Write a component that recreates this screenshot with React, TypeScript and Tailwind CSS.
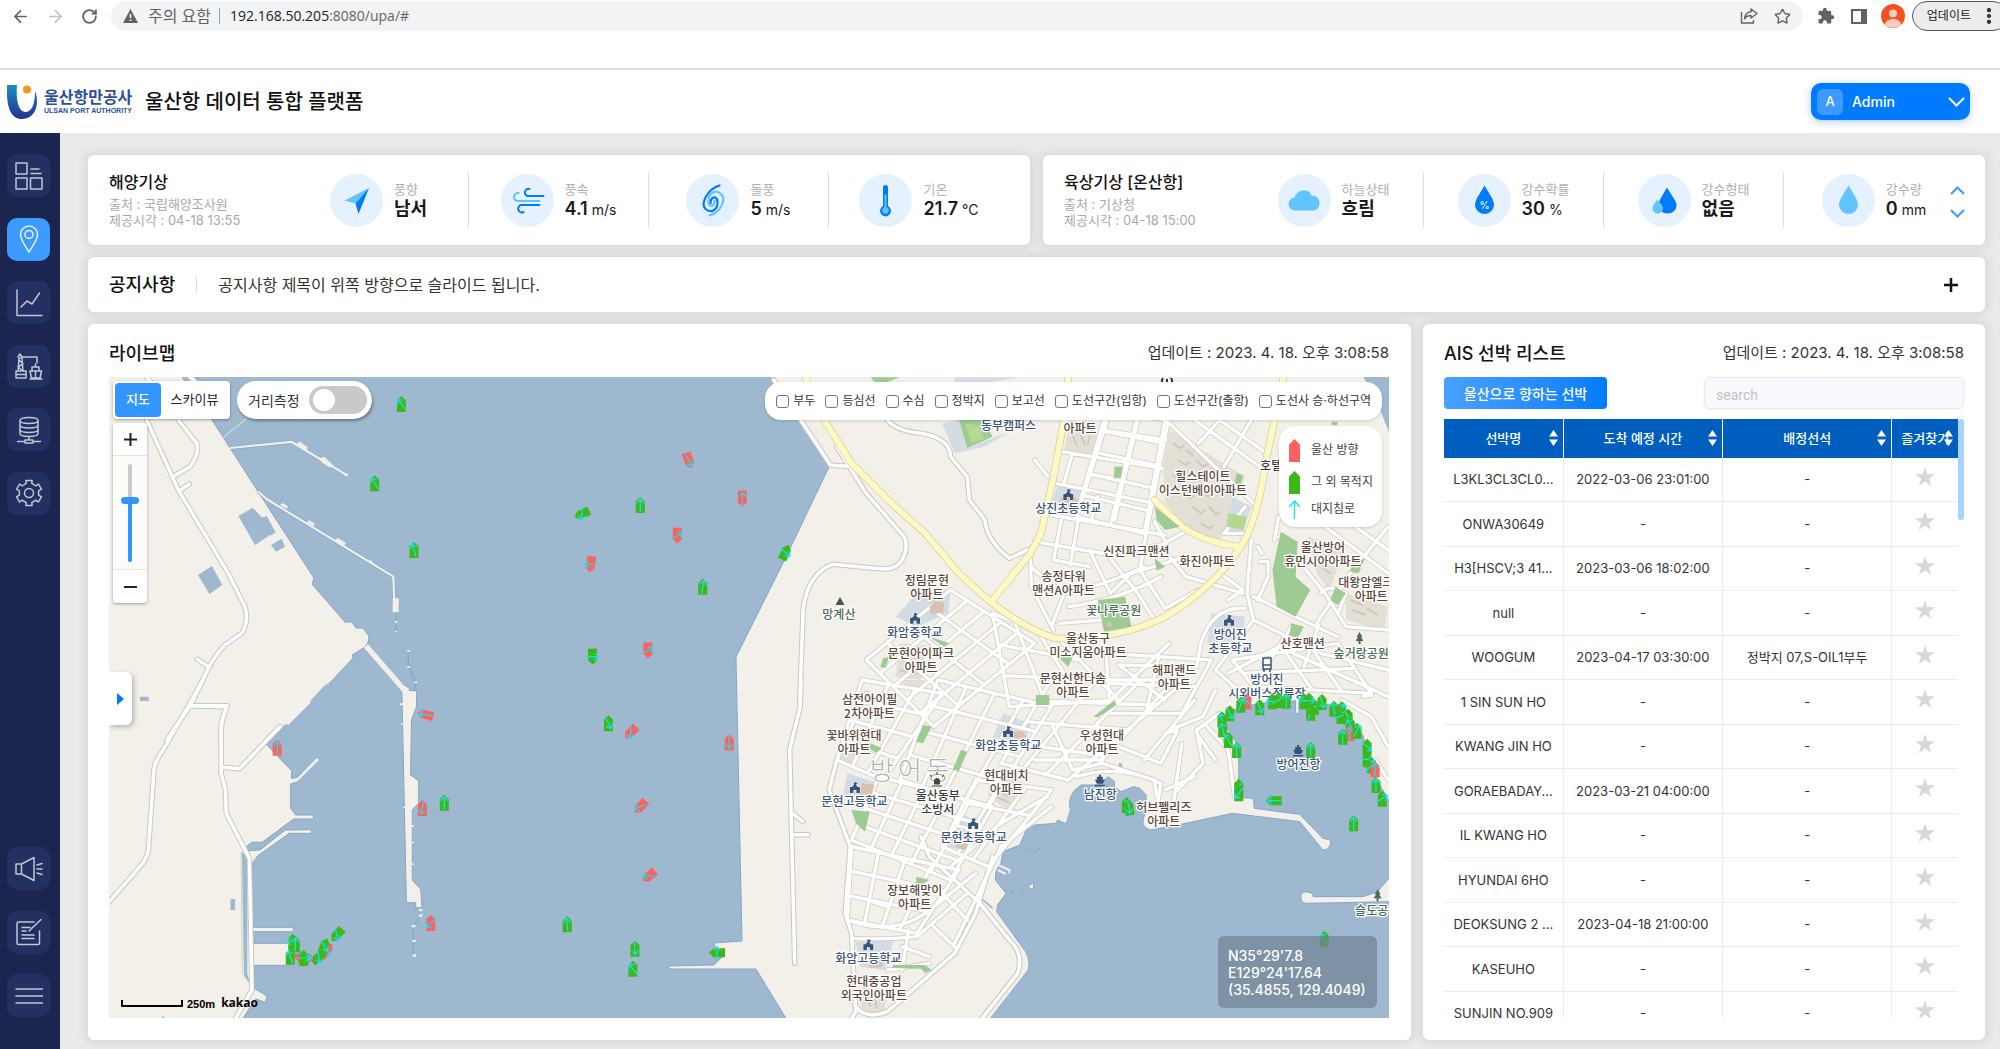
import React from 'react';
import { ArrowLeft, ArrowRight, RotateCw, Star, MoreVertical } from 'lucide-react';
import { MdExtension } from 'react-icons/md';

const SANS = "font-['Inter','Noto_Sans_CJK_KR',sans-serif]";
const CARD = 'rounded-md bg-white shadow-[0_0_10px_3px_rgba(0,0,0,0.08)]';

/* ---------- browser chrome ---------- */

function BrowserBar() {
  return (
    <div className="flex h-[70px] items-start border-b-2 border-[#dedede] bg-white pt-px font-['Open_Sans','Noto_Sans_CJK_KR',sans-serif] text-[#5f6368]">
      <nav className="flex h-[30px] w-[111px] shrink-0 items-center gap-4 pl-[11px]">
        <button aria-label="뒤로"><ArrowLeft size={19} strokeWidth={2.2} /></button>
        <button aria-label="앞으로" className="text-[#bdc1c6]"><ArrowRight size={19} strokeWidth={2.2} /></button>
        <button aria-label="새로고침"><RotateCw size={17} strokeWidth={2.6} /></button>
      </nav>
      <div className="flex h-[30px] flex-1 items-center rounded-full bg-[#f1f3f4] pl-3 pr-3">
        <svg width="15" height="14" viewBox="0 0 15 14" aria-hidden="true">
          <path d="M7.5 0 15 14H0Z" fill="#5f6368" />
          <path d="M7.5 5v4M7.5 10.5v1.5" stroke="#fff" strokeWidth="1.6" />
        </svg>
        <span className="ml-[10px] text-[16px] leading-5">주의 요함</span>
        <span className="ml-2 h-4 w-px bg-[#9aa0a6]" />
        <span className="ml-[10px] text-[14px] leading-5"><span className="text-[#202124]">192.168.50.205</span>:8080/upa/#</span>
        <span className="flex-1" />
        <button aria-label="공유">
          <svg width="18" height="16" viewBox="0 0 18 16" fill="none" stroke="#5f6368" strokeWidth="1.4" strokeLinejoin="round">
            <path d="M1.5 4v11h12v-3" /><path d="M11 1l6 4.5-6 4.500V7.500C8 7.500 6 8.500 4.500 11 5 7 7 4 11 3.700Z" />
          </svg>
        </button>
        <button aria-label="북마크" className="ml-4"><Star size={17} strokeWidth={2} /></button>
      </div>
      <div className="flex h-[30px] items-center pl-[14px]">
        <button aria-label="확장 프로그램"><MdExtension size={18} /></button>
        <button aria-label="사이드 패널" className="ml-4 h-[15px] w-[16px] border-2 border-r-[6px] border-[#5f6368]" />
        <button aria-label="프로필" className="ml-[14px]">
          <svg width="24" height="24" viewBox="0 0 24 24">
            <circle cx="12" cy="12" r="12" fill="#f4511e" />
            <circle cx="12" cy="9.500" r="4" fill="#fbcdbf" />
            <path d="M3.800 20.500C5 16.500 8 15 12 15s7 1.500 8.200 5.500A12 12 0 0 1 3.800 20.500Z" fill="#fbcdbf" />
          </svg>
        </button>
        <button className="-mr-2 ml-[7px] flex h-[30px] items-center rounded-full border border-[#555] bg-[#ececec] pl-[14px] pr-2 text-[12px] text-[#202124]">
          업데이트<MoreVertical size={20} strokeWidth={3} className="ml-2" />
        </button>
      </div>
    </div>
  );
}

function Header() {
  return (
    <header className="flex h-[63px] items-center bg-white pr-[30px] pl-[7px]">
      <svg width="31" height="36" viewBox="0 0 31 36" aria-hidden="true">
        <defs>
          <linearGradient id="logo" x1="0" y1="0" x2="0" y2="1">
            <stop offset="0" stopColor="#1b8fc4" /><stop offset="1" stopColor="#23318f" />
          </linearGradient>
        </defs>
        <path d="M0 1h10C9 12 10 27 18 28c7 0 10-8 10-21 5 12 1 28-13 28C3 35-1 22 0 1Z" fill="url(#logo)" />
        <circle cx="20" cy="5.500" r="4" fill="#f7941d" />
      </svg>
      <div className="ml-[6px] w-[92px] text-[#2a4fa0]">
        <p className="text-[16px] leading-[18px] font-bold whitespace-nowrap">울산항만공사</p>
        <p className="font-['Liberation_Sans',sans-serif] text-[7px] leading-[10px] font-bold whitespace-nowrap">ULSAN PORT AUTHORITY</p>
      </div>
      <h1 className="ml-[9px] flex-1 text-[20px] font-medium text-[#111]">울산항 데이터 통합 플랫폼</h1>
      <button className="flex h-[37px] w-[159px] items-center rounded-[10px] bg-[#007bff] pr-[5px] pl-[6px] text-[14px] font-medium text-white shadow-[0_2px_8px_rgba(0,80,220,0.3)]">
        <span className="flex size-[26px] items-center justify-center rounded-md bg-[#3d9bff] text-[13px]">A</span>
        <span className="ml-[9px] flex-1 text-left">Admin</span>
        <svg width="17" height="10" viewBox="0 0 17 10" fill="none" stroke="#fff" strokeWidth="2" strokeLinecap="round"><path d="M1.500 1.500l7 7 7-7" /></svg>
      </button>
    </header>
  );
}

/* ---------- sidebar ---------- */

const gearPath = (() => {
  const pts: string[] = [];
  for (let i = 0; i < 6; i++) {
    const base = i * 60 - 90;
    [[-27, 9.6], [-16, 10], [-14, 13], [14, 13], [16, 10], [27, 9.6]].forEach(([da, r]) => {
      const a = ((base + da) * Math.PI) / 180;
      pts.push(`${(14 + r * Math.cos(a)).toFixed(1)},${(14 + r * Math.sin(a)).toFixed(1)}`);
    });
  }
  return `M${pts.join('L')}Z`;
})();

const NAV_TOP = [
  { label: '대시보드', d: 'M1 1h11v11H1ZM1 16h11v11H1ZM15.500 16H27v11H15.500ZM16 7h8M16 11.500h10' },
  { label: '지도', active: true, d: 'M14 27C9 19 5.500 14.500 5.500 9.500a8.500 8.500 0 0 1 17 0C22.500 14.500 19 19 14 27ZM10 9.500a4 4 0 1 0 8 0 4 4 0 1 0-8 0' },
  { label: '통계', d: 'M2 1v25.500h25M6 18l6-6 5 3 7.500-11' },
  { label: '항만', d: 'M3 19L4 6h3l1 13M3 5l2-3 2 3h15v6M4 8l4 4-5 3 5 4M1 19h10v7H1ZM1 22.500h10M15 19h11.500l-1.500 7h-8.500ZM17 18v-3h7v3M20.500 15v-3M20.500 19v8M15 27h12' },
  { label: '데이터', d: 'M5 4.500c0-2 4-3 9-3s9 1 9 3-4 3-9 3-9-1-9-3ZM5 4.500v13c0 2 4 3 9 3s9-1 9-3v-13M5 9c0 2 4 3 9 3s9-1 9-3M5 13.500c0 2 4 3 9 3s9-1 9-3M14 20.500V24M10 24h8v3h-8ZM2.500 25.500H10M18 25.500h7.500' },
  { label: '설정', d: `${gearPath}M9.500 14a4.500 4.500 0 1 0 9 0 4.500 4.500 0 1 0-9 0` },
];
const NAV_BOTTOM = [
  { label: '공지', d: 'M1 9h5.500v10H1ZM6.500 9L19 2.500v23L6.500 19M22 10l5-1.500M22 14h5M22 18l5 1.500' },
  { label: '작성', d: 'M19 4H3.500Q2 4 2 5.500V25q0 1.500 1.500 1.500H23q1.500 0 1.500-1.500V13M26 1.500L14 13M7 9.500h8M7 13h4M7 17h12M7 20.500h12' },
  { label: '메뉴', d: 'M1 7h27M1 14h27M1 21h27' },
];

function NavButton({ label, d, active }: { label: string; d: string; active?: boolean }) {
  return (
    <button aria-label={label} className={`flex size-[43px] items-center justify-center rounded-[10px] ${active ? 'bg-[#3d9bff]' : 'bg-[#233061]'}`}>
      <svg width="28" height="28" viewBox="0 0 28 28" fill="none" stroke={active ? '#e8f3ff' : '#c3c6d1'} strokeWidth="1.500" strokeLinejoin="round" strokeLinecap="round">
        <path d={d} />
      </svg>
    </button>
  );
}

function Sidebar() {
  return (
    <aside className="flex w-[60px] shrink-0 flex-col justify-between bg-[#1b2550] pt-[21px] pb-8 pl-[7px]">
      <nav className="flex h-[361px] flex-col justify-between">{NAV_TOP.map((n) => <NavButton key={n.label} {...n} />)}</nav>
      <nav className="flex h-[170px] flex-col justify-between">{NAV_BOTTOM.map((n) => <NavButton key={n.label} {...n} />)}</nav>
    </aside>
  );
}

/* ---------- weather ---------- */

const DARK = '#007bf9';
const LIGHT = '#61c4ff';
const DROP = 'M0-15C5-6 9.500-1 9.500 4.500a9.500 9 0 0 1-19 0C-9.500-1-5-6 0-15Z';

const ICONS: Record<string, React.ReactNode> = {
  arrow: <g><path d="M12.500-12.500L-12 0l11 3Z" fill={LIGHT} /><path d="M12.500-12.500L-1 3 2 13.500Z" fill={DARK} /></g>,
  wind: (
    <g fill="none" strokeWidth="2" strokeLinecap="round">
      <path d="M16-4.500H0a3.500 3.500 0 1 1 2-7" stroke={DARK} />
      <path d="M12 .5H-10a4 4 0 1 1 1-8" stroke={LIGHT} />
      <path d="M12 4.500H-6a3.700 3.700 0 1 0 2 7" stroke={DARK} />
    </g>
  ),
  gust: (
    <g fill="none" strokeWidth="2.200" strokeLinecap="round">
      <path d="M7-15C-6-11-12 4-7 8.500S5 10 5 2 -2-4-2 3" stroke={DARK} />
      <path d="M-3 15C8 12 14-1 9-6S-3-9-4-1 2 8 2 0" stroke={LIGHT} />
    </g>
  ),
  temp: (
    <g>
      <path d="M-2.500-13a2.500 2.500 0 0 1 5 0V5.500a5.500 5.500 0 1 1-5 0Z" fill={DARK} />
      <path d="M0-6V8" stroke={LIGHT} strokeWidth="2" /><circle cy="10" r="3.200" fill={LIGHT} />
    </g>
  ),
  cloud: <path d="M-9 10a6.500 6.500 0 0 1-1-13C-8-9-4-10 0-10s6 2 7 5c5 0 8 3 8 7.500S12 10 9 10Z" fill={LIGHT} />,
  prob: <g><path d={DROP} fill={DARK} /><text y="8" textAnchor="middle" fontSize="10" fontWeight="700" fill="#cfe8ff">%</text></g>,
  type: (
    <g>
      <path d="M2.500-13C7-5 12 0 12 5a9 8 0 0 1-18 0C-6 0-2-5 2.500-13Z" fill={DARK} />
      <path d="M-7-1C-4 3-1.500 5-1.500 8a5.300 5 0 0 1-10.600 0C-12 5-10 3-7-1Z" fill={LIGHT} />
    </g>
  ),
  drop: <path d={DROP} fill={LIGHT} />,
};

type Stat = { icon: string; label: string; value: string; unit?: string };

const SEA: Stat[] = [
  { icon: 'arrow', label: '풍향', value: '남서' },
  { icon: 'wind', label: '풍속', value: '4.1', unit: 'm/s' },
  { icon: 'gust', label: '돌풍', value: '5', unit: 'm/s' },
  { icon: 'temp', label: '기온', value: '21.7', unit: '°C' },
];
const GROUND: Stat[] = [
  { icon: 'cloud', label: '하늘상태', value: '흐림' },
  { icon: 'prob', label: '강수확률', value: '30', unit: '%' },
  { icon: 'type', label: '강수형태', value: '없음' },
  { icon: 'drop', label: '강수량', value: '0', unit: 'mm' },
];

function WeatherCard({ title, source, time, stats, pager }: { title: string; source: string; time: string; stats: Stat[]; pager?: boolean }) {
  return (
    <section className={`${CARD} relative grid h-[90px] grid-cols-5 px-[21px] pt-[18px]`}>
      <div>
        <h2 className="text-[16px] leading-[18px] font-medium text-[#111]">{title}</h2>
        <p className="mt-[5px] text-[13px] leading-4 text-[#a9a9a9]">출처 : {source}</p>
        <p className="text-[13px] leading-4 text-[#a9a9a9]">제공시각 : {time}</p>
      </div>
      {stats.map((s, i) => (
        <div key={s.label} className={`flex h-[54px] items-center justify-center gap-[11px] ${i < 3 ? 'border-r border-[#dcdcdc]' : ''}`}>
          <svg width="53" height="53" viewBox="-26.500 -26.500 53 53" className="shrink-0" aria-hidden="true">
            <circle r="26.500" fill="#e5f1ff" />{ICONS[s.icon]}
          </svg>
          <div className="pt-[3px] whitespace-nowrap">
            <p className="text-[13px] leading-[15px] text-[#b0b0b0]">{s.label}</p>
            <p className="text-[18px] leading-6 font-semibold text-[#1a1a1a]">
              {s.value}{s.unit && <span className="ml-1 text-[14px] font-normal">{s.unit}</span>}
            </p>
          </div>
        </div>
      ))}
      {pager && (
        <div className="absolute top-[31px] right-[20px] flex flex-col gap-[14px]">
          <button aria-label="이전"><svg width="15" height="9" fill="none" stroke="#3d9bff" strokeWidth="2"><path d="M1 8l6.500-6.500L14 8" /></svg></button>
          <button aria-label="다음"><svg width="15" height="9" fill="none" stroke="#3d9bff" strokeWidth="2"><path d="M1 1l6.500 6.500L14 1" /></svg></button>
        </div>
      )}
    </section>
  );
}

/* ---------- map ---------- */

/* The chart is drawn in sheets, each with its own grid; a sheet gives origin and scale. */
type Sheet = 'w' | 'n' | 's' | 'd' | 'o';
const SHEETS: Record<Sheet, [number, number, number, number]> = {
  w: [100, 320, 1 / 3, 1 / 3],
  n: [740, 360, 1 / 2.376, 1 / 3],
  s: [740, 680, 1 / 2.376, 1 / 3],
  d: [100, 680, 1 / 2.376, 1 / 3],
  o: [0, 0, 1.2755, 1.2755],
};
const matrix = (s: Sheet) => {
  const [x, y, sx, sy] = SHEETS[s];
  return `matrix(${sx} 0 0 ${sy} ${x} ${y})`;
};
const place = (s: Sheet, px: number, py: number): [number, number] => {
  const [x, y, sx, sy] = SHEETS[s];
  return [x + px * sx, y + py * sy];
};

/* Street lattice between four corners (a-b is the top edge, d-c the bottom edge). */
function lattice(q: number[], cols: number, rows: number) {
  const [ax, ay, bx, by, cx, cy, dx, dy] = q;
  const mix = (p: number, r: number, t: number) => Math.round(p + (r - p) * t);
  let d = '';
  for (let i = 0; i <= cols; i++) {
    const t = i / cols;
    d += `M${mix(ax, bx, t)} ${mix(ay, by, t)}L${mix(dx, cx, t)} ${mix(dy, cy, t)}`;
  }
  for (let j = 0; j <= rows; j++) {
    const t = j / rows;
    d += `M${mix(ax, dx, t)} ${mix(ay, dy, t)}L${mix(bx, cx, t)} ${mix(by, cy, t)}`;
  }
  return d;
}

const WIDE: [Sheet, string][] = [
  ['w', 'M140 300L235 510 385 760 435 860Q448 905 425 940L375 975Q345 1005 325 1045L272 1155 200 1260M235 300L290 370Q300 400 270 440L222 468M240 512L268 492M325 1040L292 1018M272 1157L380 1160 366 1200 362 1260M140 170L155 190M270 170L290 190M540 1220L500 1260'],
  ['d', 'M245 0L150 210Q125 250 127 290L115 510Q112 535 95 560L22 665M215 77L302 77 288 130V280L298 330 300 400 355 535 361 930 322 1015M292 262L332 266 427 140'],
  ['n', 'M80 60L160 210 215 315 265 320M230 260L300 400 390 530Q402 560 385 600 370 630 340 627L220 613Q160 640 150 750L142 1020M350 180Q370 212 430 220 500 235 500 290L540 350 545 420 582 480Q585 540 640 595L700 560'],
  ['s', 'M145 0L143 80 118 210 130 850M130 464H162M125 400L150 425M265 1015L275 995 265 760 250 700 262 500 212 330 230 240 300 40M575 1015L660 880Q675 820 640 780L570 670 450 530 430 470M275 980Q300 1020 350 995L510 820 560 700 600 530'],
];
const STREETS: [Sheet, string][] = [
  ['n', 'M700 300L732 350M865 180L800 460M945 180L890 480M1020 60L1015 200 965 520 950 630 1010 745M860 210L1012 240M765 275L1005 325M840 345L910 360M750 370L985 430M740 465L1010 525M790 280L770 370M850 410L835 480M1020 190L1220 430M1080 180L1235 320M1140 180L1245 275M1215 180L1150 320M1175 130L1090 250M700 545L870 582 1000 555 1065 510M985 485L1015 555M765 470L745 600M805 470L785 615M690 580L692 680 745 810M745 600L830 620M830 570L880 700 930 640M870 580L945 700 985 780M690 620L770 700Q880 670 960 620M740 800L770 700M780 740Q900 720 1000 650M1000 560L1060 650 1195 700M930 640L1060 590M1010 745L1090 690M760 790L860 780'],
  ['n', 'M1215 540L1205 700 1220 780 1130 930M1280 470L1270 540M1230 560L1240 580M1235 605H1255V640M1280 530L1390 700 1440 800 1540 810M1380 490L1540 640M1440 480L1540 570M1540 500L1450 640 1370 790M1220 710L1420 830M1200 745Q1120 740 1095 850L1085 920 900 915M1220 780L1380 880 1540 930M1255 650L1230 720M1380 700Q1400 670 1440 700L1420 760M1140 640L1195 690 1160 720M1130 930L1200 1010M1160 940L1280 860 1540 1010M1310 800L1260 900M1375 795L1340 920M1020 850L880 1020M900 915L1010 1020M1200 440L1150 520H1210'],
  ['n', lattice([500, 690, 700, 850, 460, 1100, 300, 900], 5, 4)],
  ['n', lattice([600, 760, 760, 840, 900, 1020, 640, 1040], 3, 3)],
  ['n', lattice([870, 880, 1120, 900, 1050, 1060, 880, 1060], 2, 2)],
  ['n', lattice([1170, 900, 1420, 850, 1500, 1000, 1220, 980], 4, 2)],
  ['n', lattice([880, 150, 1010, 180, 960, 520, 800, 470], 2, 5)],
  ['s', lattice([290, 0, 480, 40, 340, 300, 230, 240], 3, 4)],
  ['s', lattice([470, 0, 740, 80, 590, 380, 380, 300], 4, 4)],
  ['s', lattice([740, 0, 1060, 0, 780, 300, 620, 250], 3, 4)],
  ['s', lattice([330, 290, 600, 380, 500, 600, 265, 480], 5, 4)],
  ['s', lattice([265, 500, 520, 570, 420, 760, 255, 720], 4, 3)],
  ['s', lattice([560, 300, 740, 330, 590, 560, 480, 500], 3, 3)],
  ['s', 'M740 130L790 270 860 250 985 300 990 350M800 290Q900 250 1000 310L990 390M700 240L860 240 1010 30M860 250L850 130M900 200L1000 250 1040 150 1010 160M1020 150L1100 110 1130 30M1040 330L1100 250 1085 150 1140 100M1050 190L1030 370M1010 330L1080 290M1110 140L1160 210 1175 350M1090 170L1130 240M960 240L1080 60M740 380L620 500 510 790M255 720Q360 770 440 700L560 580M270 775Q330 780 420 770L540 640M400 750L385 870M480 640L540 720M460 740L510 800M350 870L450 850M385 800L450 830M300 660L350 680M500 560L620 430 730 350M1540 200L1500 110 1430 60M1480 50L1500 45M1540 300L1510 240'],
];
const AVENUES: [Sheet, string][] = [
  ['n', 'M155 50L205 190 265 310 360 430 440 520 520 640 590 720Q680 810 750 835 900 840 1010 770 1120 690 1190 560 1230 480 1250 300L1292 50M780 50L770 180 745 350 715 520 690 580 600 720M985 420L1050 500Q1110 550 1190 560'],
];
const PARKS: [Sheet, string][] = [
  ['n', 'M310 52H380L350 66H320ZM520 180L580 180 600 230 540 265ZM890 320H910L905 355H888ZM1180 340L1195 345 1190 375 1175 370ZM985 440L1045 500 1010 510 990 480ZM985 595L1010 620 990 632ZM1285 515L1325 545 1320 650 1355 690 1320 770 1275 740 1265 630ZM1455 610L1485 595 1470 640 1450 635ZM1415 680L1440 700 1420 735 1403 720ZM850 720L915 710 930 800 865 815ZM1310 790L1340 800 1325 835 1305 825ZM340 895L355 890 345 925 333 920ZM450 830L498 850 485 860ZM755 890L795 880 780 920ZM1405 185H1420V195H1405Z'],
  ['s', 'M703 45H735V75H703ZM840 110L890 60 895 75 850 112ZM435 135L455 140 435 190 418 185ZM310 190L337 205 325 218 307 208ZM525 210L540 215 520 273 505 270ZM265 390L308 395 297 455 275 430ZM418 590L450 600 420 620ZM365 855H440L455 870 440 880 430 866 360 864Z'],
];
const CAMPUS: [Sheet, string][] = [
  ['n', 'M510 52H660L600 66H510ZM480 190L520 180 540 265 600 235 640 215 580 260 510 280ZM755 375L815 385 800 440 740 430ZM1170 410L1215 440 1190 530 1150 510ZM370 770L420 700 500 690 495 760 420 800ZM1120 760L1200 770 1195 850 1150 880 1110 850Z'],
  ['s', 'M625 100L690 130 680 180 600 175ZM255 280L330 310 310 360 245 345ZM530 405L580 430 540 510 490 500ZM275 785L365 780 345 870 285 860Z'],
];
const BLOCKS: [Sheet, string][] = [
  ['n', 'M1020 210L1200 350 1140 540 1080 530 1010 430 1005 320ZM780 210L850 215 835 285 770 270ZM1350 530L1440 560 1400 690 1370 640ZM1440 700L1540 740 1530 810 1440 780ZM380 850L470 860 430 960 370 950Z'],
  ['s', 'M590 280L660 300 690 320 640 390 590 350ZM235 200L290 220 270 255 235 235ZM290 920L350 940 340 1005 285 1000ZM370 0H440L420 30Z'],
];
/* Building outlines inside the apartment blocks. */
const HOUSES: [Sheet, string][] = [
  ['n', 'M1030 250l15 15 10-10M1060 270l18 18M1040 300l20 15 8-10M1085 300l15 20 12-8M1030 345l18 18 10-8M1075 345l20 18M1110 340l14 16 12-8M1050 395l20 20 10-8M1095 390l18 20 12-12M1140 380l14 12M1075 440l20 20 10-10M1115 440l16 24 10-10M1095 490l20 15 10-10M790 225l10 30M810 225l10 30M830 230l-4 25M1380 560l30 20M1375 590l30 22M1385 625l20 16M1450 720l30 15M1455 750l30 15M1490 745l25 20M390 870l50 15M385 900l50 15M380 930l40 12'],
  ['s', 'M605 300l40 25M602 325l36 24M610 350l28 18M300 940l10 40M320 950l5 35'],
];

type Ship = [Sheet, number, number, 'g' | 'r', number, number];
const SHIPS: Ship[] = [
  ['w', 904, 252, 'g', 0, -40], ['w', 824, 490, 'g', 0, -32], ['w', 942, 690, 'g', 0, -16], ['w', 1446, 582, 'g', -115, 180],
  ['w', 1472, 733, 'r', 188, -95], ['w', 1478, 1010, 'g', 178, 92],
  ['o', 540, 361, 'r', 160, 150], ['o', 502, 396, 'g', 0, 0], ['o', 582, 391, 'r', 180, 0], ['o', 531, 420, 'r', 180, 60],
  ['o', 551, 460, 'g', 0, 10], ['o', 508, 510, 'r', 180, 60], ['n', 108, 577, 'g', 25, 130],
  ['d', 773, 104, 'r', -75, -80], ['d', 1208, 130, 'g', 0, 150], ['d', 1261, 157, 'r', -138, 185], ['d', 1495, 187, 'r', 0, 178],
  ['d', 421, 203, 'r', 0, 0], ['d', 766, 384, 'r', 0, 190], ['d', 818, 368, 'g', 0, 0], ['d', 1284, 380, 'r', -138, -110],
  ['d', 1304, 588, 'r', -128, -92], ['d', 786, 729, 'r', 0, -130], ['d', 1110, 733, 'g', 0, -5], ['d', 1271, 806, 'g', 0, 175],
  ['d', 1266, 866, 'g', 0, -40], ['d', 1466, 818, 'g', -90, 0], ['d', 563, 765, 'g', -140, 165], ['d', 539, 810, 'r', 40, 150],
  ['d', 533, 798, 'g', 20, 150], ['d', 520, 832, 'g', 55, 170], ['d', 468, 820, 'r', -40, 90], ['d', 490, 835, 'r', 90, 80],
  ['d', 458, 785, 'g', 0, -90], ['d', 452, 830, 'g', 0, -20], ['d', 484, 834, 'g', 0, 90], ['d', 464, 792, 'g', 0, 0],
  ['s', 1145, 118, 'g', 0, -20], ['s', 1147, 148, 'g', 0, -15], ['s', 1164, 100, 'g', 0, 150], ['s', 1160, 180, 'g', 0, -30],
  ['s', 1180, 210, 'g', 0, 0], ['s', 1204, 64, 'r', 0, -50], ['s', 1190, 74, 'g', 0, 20], ['s', 1235, 82, 'g', 0, 160],
  ['s', 1265, 64, 'g', 0, -90], ['s', 1280, 60, 'g', 0, 60], ['s', 1298, 62, 'g', 0, 0], ['s', 1340, 64, 'g', 0, -60],
  ['s', 1356, 98, 'g', 0, 20], ['s', 1365, 80, 'g', 0, 90], ['s', 1383, 66, 'g', 0, 160], ['s', 1352, 62, 'g', 0, 90],
  ['s', 1411, 86, 'g', 0, -10], ['s', 1430, 88, 'g', 0, 30], ['s', 1428, 108, 'g', 0, 70], ['s', 1445, 110, 'g', 0, 150],
  ['s', 1450, 135, 'g', 0, -30], ['s', 1448, 160, 'r', 0, 0], ['s', 1432, 170, 'g', 0, 0], ['s', 1466, 152, 'g', 0, 30],
  ['s', 1490, 200, 'g', 0, 130], ['s', 1490, 238, 'g', 0, 90], ['s', 1500, 256, 'g', 0, 40], ['s', 1509, 268, 'r', 0, 0],
  ['s', 1511, 315, 'g', 0, 0], ['s', 1526, 356, 'g', 0, 60], ['s', 1185, 320, 'g', 0, -140], ['s', 1185, 340, 'g', 0, -140],
  ['s', 1268, 362, 'g', -90, -90], ['s', 1458, 430, 'g', 0, 0], ['s', 1356, 210, 'g', 0, 0], ['s', 1388, 776, 'g', 0, -40],
  ['s', 918, 375, 'g', 0, 160], ['s', 924, 382, 'g', -10, 170],
];

type Kind = 'apt' | 'school' | 'park' | 'plain';
const INK: Record<Kind, string> = { apt: '#5b4738', school: '#3a5478', park: '#4d6b57', plain: '#3a3a3a' };
const LABELS: [Sheet, number, number, Kind, string[]][] = [
  ['n', 638, 211, 'school', ['동부캠퍼스']],
  ['n', 808, 178, 'apt', ['상아2차', '아파트']],
  ['n', 1100, 362, 'apt', ['힐스테이트', '이스턴베이아파트']],
  ['n', 1262, 331, 'plain', ['호텔']],
  ['n', 780, 458, 'school', ['상진초등학교']],
  ['n', 942, 588, 'apt', ['신진파크맨션']],
  ['n', 1110, 617, 'apt', ['화진아파트']],
  ['n', 1385, 576, 'apt', ['울산방어', '휴먼시아아파트']],
  ['n', 1500, 681, 'apt', ['대왕암엘크루', '아파트']],
  ['n', 769, 662, 'apt', ['송정타워', '맨션A아파트']],
  ['n', 444, 674, 'apt', ['정림문현', '아파트']],
  ['n', 235, 778, 'park', ['망계산']],
  ['n', 415, 830, 'school', ['화암중학교']],
  ['n', 888, 766, 'park', ['꽃나루공원']],
  ['n', 827, 848, 'apt', ['울산동구', '미소지움아파트']],
  ['n', 430, 893, 'apt', ['문현아이파크', '아파트']],
  ['n', 1165, 836, 'school', ['방어진', '초등학교']],
  ['n', 1337, 864, 'apt', ['산호맨션']],
  ['n', 1476, 894, 'park', ['숲거랑공원']],
  ['n', 1032, 944, 'apt', ['해피랜드', '아파트']],
  ['n', 791, 970, 'apt', ['문현신한다솜', '아파트']],
  ['n', 1252, 972, 'school', ['방어진', '시외버스정류장']],
  ['s', 308, 73, 'apt', ['삼전아이필', '2차아파트']],
  ['s', 271, 181, 'apt', ['꽃바위현대', '아파트']],
  ['s', 637, 210, 'school', ['화암초등학교']],
  ['s', 860, 181, 'apt', ['우성현대', '아파트']],
  ['s', 633, 300, 'apt', ['현대비치', '아파트']],
  ['s', 470, 360, 'plain', ['울산동부', '소방서']],
  ['s', 272, 379, 'school', ['문현고등학교']],
  ['s', 555, 486, 'school', ['문현초등학교']],
  ['s', 856, 356, 'school', ['남진항']],
  ['s', 1007, 397, 'apt', ['허브펠리즈', '아파트']],
  ['s', 1327, 267, 'school', ['방어진항']],
  ['s', 415, 645, 'apt', ['장보해맞이', '아파트']],
  ['s', 305, 850, 'school', ['화암고등학교']],
  ['s', 318, 918, 'apt', ['현대중공업', '외국인아파트']],
  ['s', 1514, 705, 'park', ['슬도공원']],
];
const SCHOOLS: [Sheet, number, number][] = [
  ['n', 780, 405], ['n', 416, 776], ['n', 1162, 782], ['s', 637, 156], ['s', 273, 324], ['s', 554, 432], ['s', 305, 796],
];
const HARBORS: [Sheet, number, number][] = [['s', 855, 302], ['s', 1326, 213]];
const TREES: [Sheet, number, number][] = [['n', 1472, 834], ['s', 1515, 646]];

function Layer({ data, ...rest }: { data: [Sheet, string][] } & React.SVGProps<SVGPathElement>) {
  return <>{data.map(([s, d], i) => <path key={i} transform={matrix(s)} d={d} vectorEffect="non-scaling-stroke" {...rest} />)}</>;
}

const SHORE = '#85a7c9';
const LAND = '#f3f0e9';
const SHORE_LINES: [Sheet, string][] = [['w', 'M370 352L440 295']];
const PIERS: [Sheet, string][] = [
  ['w', 'M390 384L575 366 740 465M475 515L500 537 880 770 883 850'],
];

function PortMap() {
  return (
    <svg viewBox="109 377 1280 641" preserveAspectRatio="xMidYMid slice" className="absolute inset-0 size-full font-['Noto_Sans_CJK_KR',sans-serif]" role="img" aria-label="울산항 지도">
      <rect x="109" y="377" width="1280" height="641" fill="#9db8cf" />
      <g fill={LAND} stroke={SHORE} strokeWidth="1">
        <path d="M100 370H177L212 420 223 437 257 490 314 578 312 584 345 622H352L356 628H363L369 636 368 643 365 647 352 655 353 658 327 686 327 700H100Z" />
        <path d="M766 370L829 467 786 557 736 657 742 941 714 943 716 950 722 957 714 965 669 966V969L756 969 790 1025H1395V370Z" />
        <path d="M22 10H548L447 138 442 133 395 193 455 272V295L468 293 515 232 522 240 470 305 453 312V385L465 405H505L508 412 503 417H460L385 487H360L345 503 352 512 380 510 440 450 500 449 503 455 500 460H450L375 527 362 550V742H458L460 750 455 755H363V790H450V856H366V925L397 948 393 967 370 957 332 1030H0V10Z" transform={matrix('d')} vectorEffect="non-scaling-stroke" />
        <path d="M700 -12L717 10 735 25V32H752V80L740 120 738 285 757 303V370L742 390V600L762 628 765 683H750V668H728L717 15Z" transform={matrix('d')} vectorEffect="non-scaling-stroke" />
        <path d="M592 1020L685 870Q692 830 670 800L610 695 612 675 632 640 607 600Q605 570 620 550L625 515 665 495 680 450 700 435 750 430 755 420 775 432 785 390Q775 345 810 315L850 315 875 290 890 305V320L905 335 935 320 950 325 965 345 965 395Q945 440 975 450L1040 435 1170 400 1330 425 1385 510Q1405 510 1403 480L1385 475 1330 403 1222 385 1220 355 1185 353V200L1150 130Q1150 100 1190 80L1270 65 1320 62V100H1328V62Q1400 60 1425 95L1480 165 1500 270 1545 370V1020Z" fill="#9db8cf" transform={matrix('s')} vectorEffect="non-scaling-stroke" />
        <path d="M1333 652Q1330 638 1345 635 1362 638 1362 650L1480 650 1515 635 1545 590V665L1345 670Q1333 668 1333 652ZM685 510l8-10-5 14ZM700 515l14-14-8 14ZM685 620l12-14 1 16-6 6ZM642 630l6 12ZM668 630l8 16-6-4Z" transform={matrix('s')} vectorEffect="non-scaling-stroke" />
      </g>
      <path d="M100 670H341L309 703H100Z" fill={LAND} />
      <path d="M324 688V702H311Z" fill="#9db8cf" stroke="#9db8cf" strokeWidth="7" strokeLinejoin="round" transform="translate(3 0)" />
      <path d="M1178 375" />
      <path d="M605 550l35 20v10M612 570l20 12" transform={matrix('s')} fill="none" stroke={LAND} strokeWidth="2" vectorEffect="non-scaling-stroke" />
      <g fill="#9db8cf">
        <path d="M415 588L458 563 525 635 465 675ZM480 595L500 588 527 637 512 647ZM513 675L545 656 555 680 528 695ZM294 765L336 738 367 795 328 822ZM120 1130H146V1143H120Z" transform={matrix('w')} />
        <path d="M337 515L350 530V880L356 912 342 885ZM310 657H321V690H310ZM145 1012l5-4 5 6Z" transform={matrix('d')} />
        <path d="M1480 50H1545V225L1505 100Z" transform={matrix('n')} />
        <path d="M900 250h8v22h-8ZM575 655l25 25v8l-25-28Z" transform={matrix('s')} />
      </g>

      <Layer data={SHORE_LINES} fill="none" stroke="#c3d2df" strokeWidth="1.500" />
      <Layer data={PIERS} fill="none" stroke={SHORE} strokeWidth="3.500" />
      <Layer data={PIERS} fill="none" stroke={LAND} strokeWidth="2.200" />
      <g transform={matrix('w')}>
        <path d="M590 370l10-5 24 18-6 8ZM660 415l12-5 30 28-14 4-24-16ZM735 460l10 2-4 8-8-4ZM540 555l8-6 16 10-4 8ZM620 607l8-6 16 10-4 8ZM705 660l8-6 24 14-4 10ZM805 726l6-6 20 20ZM878 835h18v42h-18Z" fill={LAND} />
        <path d="M798 978L915 1112" stroke={LAND} strokeWidth="16" />
        <path d="M888 877V935M925 993V1040L948 1087 944 1112" fill="none" stroke={SHORE} strokeWidth="4" />
        <path d="M885 902h7v6h-7ZM886 932h6v5h-6ZM922 990h7v6h-7ZM922 1038h7v6h-7ZM944 1084h7v6h-7Z" fill={LAND} />
      </g>
      <g transform={matrix('d')}>
        <path d="M762 690L760 710 744 738V825" fill="none" stroke={SHORE} strokeWidth="3" />
        <path d="M758 687h8v7h-8ZM758 703h8v7h-8ZM741 735h8v7h-8ZM742 779h8v7h-8ZM743 823h8v7h-8ZM712 70h8v6h-8ZM716 130h6v5h-6ZM740 435h6v5h-6ZM740 485h6v5h-6ZM720 380h6v5h-6ZM740 550h6v5h-6Z" fill={LAND} />
        <path d="M335 515L338 880L356 910" fill="none" stroke="#b9d0b0" strokeWidth="2" />
      </g>

      <Layer data={BLOCKS} fill="#e3dfd5" />
      <Layer data={HOUSES} fill="none" stroke="#cdc9be" strokeWidth="2" />
      <Layer data={CAMPUS} fill="#d3dbe5" />
      <g fill="none" strokeLinejoin="round" strokeLinecap="round">
        <Layer data={STREETS} stroke="#cfccc5" strokeWidth="5" />
        <Layer data={WIDE} stroke="#c9c7c1" strokeWidth="5.500" />
        <Layer data={STREETS} stroke="#fff" strokeWidth="3.400" />
        <Layer data={WIDE} stroke="#fff" strokeWidth="3.500" />
        <Layer data={AVENUES} stroke="#d9cf9f" strokeWidth="7.500" />
        <Layer data={AVENUES} stroke="#fdf8c4" strokeWidth="6" />
      </g>
      <Layer data={PARKS} fill="#9dcb93" />
      <path d="M1160 460l45 10-8 40-40-10ZM535 190l35 8 10 40-30 10Z" transform={matrix('n')} fill="#b5d88f" />
      <path d="M640 160l30-10 10 20-20 15ZM290 310l30 5-8 35-28-5ZM510 485l30 5-5 20-20-5ZM305 840l35-5-2 26-30 4Z" transform={matrix('s')} fill="#d9c2b0" />
      <path d="M450 740l15-20 20 8-2 30-30 5ZM760 415l35-5 15 25-45 8ZM872 790l10-5 2 14-12 2Z" transform={matrix('n')} fill="#d9c2b0" />

      <text x="870" y="780" fontSize="26" letterSpacing="4" fontWeight="300" fill="#b3b0ab" stroke="#fff" strokeWidth="2" paintOrder="stroke">방어동</text>

      {SCHOOLS.map(([s, px, py], i) => {
        const [x, y] = place(s, px, py);
        return <path key={i} transform={`translate(${x} ${y})`} d="M-5 5V-1H-3L-1-3V-6L3-5 1-3 3-1H5V5H1.500V2H-1.500V5Z" fill="#3a5478" stroke="#fff" strokeWidth="1" paintOrder="stroke" />;
      })}
      {HARBORS.map(([s, px, py], i) => {
        const [x, y] = place(s, px, py);
        return <path key={i} transform={`translate(${x} ${y})`} d="M-1-6H1V-4H3V-1H5L3 3H-3L-5-1H-3V-4H-1ZM-5 4H5V5.500H-5Z" fill="#3a5478" />;
      })}
      {TREES.map(([s, px, py], i) => {
        const [x, y] = place(s, px, py);
        return <path key={i} transform={`translate(${x} ${y})`} d="M0-6L3-1H1.500L4 3H1V6H-1V3H-4L-1.500-1H-3Z" fill="#4d6b57" />;
      })}
      <path d="M840 597l4.500 8h-9Z" fill="#3f5a49" />
      <path d="M934.500 784v-3a2.500 2.500 0 0 1 5 0v3ZM932 786h10" fill="#444" stroke="#444" />
      <path d="M932 777l-2-2M942 777l2-2M937 775v-3" stroke="#444" />
      <path d="M1263 658h8v11h-8ZM1264 669v3M1270 669v3M1263 665h8" fill="#fff" stroke="#3a5478" strokeWidth="1.500" />
      <path d="M1163 378a5 5 0 0 0 0 6M1171 378a5 5 0 0 1 0 6M1167 379v4" stroke="#333" strokeWidth="2" fill="none" />

      {LABELS.map(([s, px, py, kind, lines], i) => {
        const [x, y] = place(s, px, py);
        return (
          <text key={i} x={x} y={y} textAnchor="middle" fontSize="12" fontWeight="500" fill={INK[kind]} stroke="#fff" strokeWidth="2.500" strokeLinejoin="round" paintOrder="stroke">
            {lines.map((l, j) => <tspan key={l} x={x} dy={j ? 14 : 0}>{l}</tspan>)}
          </text>
        );
      })}

      {SHIPS.map(([s, px, py, c, turn, heading], i) => {
        const [x, y] = place(s, px, py);
        return (
          <g key={i} transform={`translate(${x} ${y})`}>
            <path transform={`rotate(${turn})`} d="M0-8L4.500-3.500V8H-4.500V-3.500Z" fill={c === 'g' ? '#3db81a' : '#ff6161'} />
            <path transform={`rotate(${heading})`} d="M0 7V-6M-3.500-2L0-6 3.500-2" fill="none" stroke="#19e3ee" strokeWidth="1.200" />
          </g>
        );
      })}
    </svg>
  );
}

const LAYERS = ['부두', '등심선', '수심', '정박지', '보고선', '도선구간(입항)', '도선구간(출항)', '도선사 승·하선구역'];

function MapControls() {
  return (
    <>
      <div className="absolute top-1 left-1 flex h-[38px] w-[117px] items-center rounded bg-white p-[2px] text-[13px] shadow-[0_1px_3px_rgba(0,0,0,0.35)]">
        <button className="h-full w-[46px] rounded bg-[#3396ff] font-medium text-white">지도</button>
        <button className="flex-1 text-[#222]">스카이뷰</button>
      </div>
      <label className="absolute top-1 left-[128px] flex h-[38px] items-center gap-[9px] rounded-full bg-white pr-[5px] pl-[11px] text-[14px] text-[#333] shadow-[1px_2px_3px_rgba(0,0,0,0.35)]">
        거리측정
        <input type="checkbox" className="peer sr-only" />
        <span className="flex h-[28px] w-[58px] items-center rounded-full bg-[#c9c9c9] pl-1"><span className="size-[22px] rounded-full bg-white" /></span>
      </label>
      <div className="absolute top-[46px] left-1 flex w-[34px] flex-col items-center rounded-[3px] bg-white shadow-[0_1px_3px_rgba(0,0,0,0.35)]">
        <button aria-label="확대" className="flex h-[33px] w-full items-center justify-center border-b border-[#e4e4e4]">
          <svg width="13" height="13" stroke="#222" strokeWidth="2"><path d="M6.500 0v13M0 6.500h13" /></svg>
        </button>
        <div className="relative flex h-[113px] w-full justify-center bg-[#fcfcfb] pt-[8px]">
          <div className="h-[98px] w-1 rounded bg-[#ccc] pt-9"><div className="h-[62px] rounded bg-[#3396ff]" /></div>
          <span className="absolute top-[41px] h-[7px] w-[18px] rounded-sm bg-[#3396ff]" />
          <input type="range" aria-label="지도 확대 수준" className="absolute inset-0 size-full opacity-0 [writing-mode:vertical-lr]" />
        </div>
        <button aria-label="축소" className="flex h-[34px] w-full items-center justify-center border-t border-[#e4e4e4]">
          <svg width="13" height="2" stroke="#222" strokeWidth="2"><path d="M0 1h13" /></svg>
        </button>
      </div>
      <button aria-label="패널 열기" className="absolute top-[295px] left-0 flex h-[53px] w-[23px] items-center justify-center rounded-r-md bg-white shadow-[2px_2px_5px_rgba(0,0,0,0.25)]">
        <svg width="7" height="12"><path d="M0 0l7 6-7 6Z" fill="#007bff" /></svg>
      </button>

      <div className="absolute top-[5px] right-[7px] flex h-[38px] items-center gap-[10px] rounded-[16px] bg-white px-[11px] text-[12px] text-[#333] shadow-[0_1px_3px_rgba(0,0,0,0.15)]">
        {LAYERS.map((l) => (
          <label key={l} className="flex items-center gap-1 whitespace-nowrap">
            <input type="checkbox" className="size-[13px] appearance-none rounded-[3px] border border-[#767676] bg-white" />{l}
          </label>
        ))}
      </div>
      <ul className="absolute top-[49px] right-[7px] flex h-[101px] w-[103px] flex-col rounded-[16px] bg-white pt-[12px] pl-[10px] text-[12px] text-[#444] shadow-[0_1px_3px_rgba(0,0,0,0.15)]">
        <li className="flex h-[24px] items-center gap-[11px]"><svg width="11" height="23"><path d="M5.500 0L11 5.500V23H0V5.500Z" fill="#ff6161" /></svg>울산 방향</li>
        <li className="mt-[8px] flex h-[24px] items-center gap-[11px]"><svg width="11" height="23"><path d="M5.500 0L11 5.500V23H0V5.500Z" fill="#3db81a" /></svg>그 외 목적지</li>
        <li className="mt-[5px] flex h-[20px] items-center gap-[11px]"><svg width="11" height="19" fill="none" stroke="#19e3ee" strokeWidth="1.400"><path d="M5.500 19V1M0 7L5.500 1 11 7" /></svg>대지침로</li>
      </ul>
      <div className="absolute right-[12px] bottom-[10px] flex h-[72px] w-[159px] flex-col justify-center rounded-md bg-[#6f8292]/70 pl-[10px] text-[14px] leading-[17px] font-medium whitespace-nowrap text-white">
        <p>N35°29'7.8</p><p>E129°24'17.64</p><p>(35.4855, 129.4049)</p>
      </div>
      <div className="absolute bottom-[6px] left-3 flex items-end text-black">
        <span className="mb-[5px] h-[7px] w-[62px] border-2 border-t-0 border-black" />
        <span className="ml-1 font-['Liberation_Sans',sans-serif] text-[11px] leading-4 font-bold">250m</span>
        <span className="ml-[6px] font-['Open_Sans',sans-serif] text-[12px] leading-[18px] font-bold">kakao</span>
      </div>
    </>
  );
}

function UpdateStamp() {
  return <p className="text-[15px] text-[#333]">업데이트 : 2023. 4. 18. 오후 3:08:58</p>;
}

function LiveMap() {
  return (
    <section className={`${CARD} flex flex-col pt-[16px] pr-[22px] pb-[22px] pl-[21px]`}>
      <div className="flex h-[26px] items-center justify-between">
        <h2 className="text-[18px] font-medium text-[#111]">라이브맵</h2>
        <UpdateStamp />
      </div>
      <div className="relative mt-[11px] flex-1 overflow-hidden"><PortMap /><MapControls /></div>
    </section>
  );
}

/* ---------- ship list ---------- */

const ROWS: [string, string, string][] = [
  ['L3KL3CL3CL0...', '2022-03-06 23:01:00', '-'],
  ['ONWA30649', '-', '-'],
  ['H3[HSCV;3 41...', '2023-03-06 18:02:00', '-'],
  ['null', '-', '-'],
  ['WOOGUM', '2023-04-17 03:30:00', '정박지 07,S-OIL1부두'],
  ['1 SIN SUN HO', '-', '-'],
  ['KWANG JIN HO', '-', '-'],
  ['GORAEBADAY...', '2023-03-21 04:00:00', '-'],
  ['IL KWANG HO', '-', '-'],
  ['HYUNDAI 6HO', '-', '-'],
  ['DEOKSUNG 2 ...', '2023-04-18 21:00:00', '-'],
  ['KASEUHO', '-', '-'],
  ['SUNJIN NO.909', '-', '-'],
];
const COLUMNS = [
  { name: '선박명', width: 'w-[119px]' },
  { name: '도착 예정 시간', width: 'w-[159px]' },
  { name: '배정선석', width: 'w-[169px]' },
  { name: '즐겨찾기', width: 'w-[66px]' },
];

function ShipList() {
  return (
    <section className={`${CARD} flex flex-col px-[21px] pt-[16px] pb-[22px]`}>
      <div className="flex h-[26px] items-center justify-between">
        <h2 className="text-[18px] font-medium text-[#111]">AIS 선박 리스트</h2>
        <UpdateStamp />
      </div>
      <div className="mt-[11px] flex h-8 items-center justify-between">
        <button className="h-8 w-[163px] rounded bg-linear-to-r from-[#47a1ff] to-[#007bff] text-[14px] font-medium text-white">울산으로 향하는 선박</button>
        <input type="search" aria-label="선박 검색" placeholder="search" className="h-8 w-[260px] rounded-md border border-[#e8e9ee] bg-[#f8f9fd] px-[11px] pt-1 font-['Roboto',sans-serif] text-[14px] shadow-[0_0_4px_rgba(0,0,0,0.05)] placeholder:text-[#c2c2c2]" />
      </div>
      <div className="mt-[10px] flex h-[599px] overflow-hidden">
        <table className="h-[617px] flex-1 table-fixed border-collapse text-center text-[13px] text-[#333]">
          <thead>
            <tr className="h-[39px] bg-[#005fbe] text-white">
              {COLUMNS.map((c, i) => (
                <th key={c.name} scope="col" className={`${c.width} relative overflow-hidden font-medium whitespace-nowrap ${i < 3 ? 'border-r border-white' : ''}`}>
                  {c.name}
                  <svg width="9" height="16" viewBox="0 0 9 16" className="absolute top-[11px] right-[5px]" fill="#fff"><path d="M4.500 0L9 6.500H0ZM4.500 16L0 9.500H9Z" /></svg>
                </th>
              ))}
            </tr>
          </thead>
          <tbody>
            {ROWS.map(([name, eta, berth]) => (
              <tr key={name} className="border-b border-[#ececec]">
                <td className="border-r border-[#ececec] pt-px whitespace-nowrap">{name}</td>
                <td className="border-r border-[#ececec] pt-px whitespace-nowrap">{eta}</td>
                <td className="border-r border-[#ececec] pt-px whitespace-nowrap">{berth}</td>
                <td className="pb-[6px]">
                  <button aria-label={`${name} 즐겨찾기`} className="align-middle">
                    <svg width="20" height="20" viewBox="0 0 20 20" fill="#d8d8d8"><path d="M10 0l2.400 7.300H20l-6.100 4.500 2.300 7.300L10 14.600l-6.200 4.500 2.300-7.300L0 7.300h7.600Z" /></svg>
                  </button>
                </td>
              </tr>
            ))}
          </tbody>
        </table>
        <div className="h-[101px] w-[6px] shrink-0 rounded bg-[#a9d3ff]" />
      </div>
    </section>
  );
}

export default function App() {
  return (
    <div className={`${SANS} flex min-h-screen flex-col overflow-hidden bg-[#eaeaea]`}>
      <BrowserBar />
      <Header />
      <div className="flex flex-1">
        <Sidebar />
        <main className="flex min-w-0 flex-1 flex-col gap-3 pt-[22px] pr-[15px] pb-[9px] pl-[28px]">
          <div className="grid grid-cols-2 gap-[13px]">
            <WeatherCard title="해양기상" source="국립해양조사원" time="04-18 13:55" stats={SEA} />
            <WeatherCard title="육상기상 [온산항]" source="기상청" time="04-18 15:00" stats={GROUND} pager />
          </div>
          <section className={`${CARD} flex h-[55px] items-center pr-[27px] pl-[21px]`}>
            <h2 className="text-[18px] font-medium text-[#111]">공지사항</h2>
            <span className="mx-[21px] h-4 w-px bg-[#ddd]" />
            <p className="flex-1 text-[16px] text-[#333]">공지사항 제목이 위쪽 방향으로 슬라이드 됩니다.</p>
            <button aria-label="공지 더보기"><svg width="14" height="14" stroke="#111" strokeWidth="2.500"><path d="M7 0v14M0 7h14" /></svg></button>
          </section>
          <div className="grid flex-1 grid-cols-[1323fr_562fr] gap-3">
            <LiveMap />
            <ShipList />
          </div>
        </main>
      </div>
    </div>
  );
}
